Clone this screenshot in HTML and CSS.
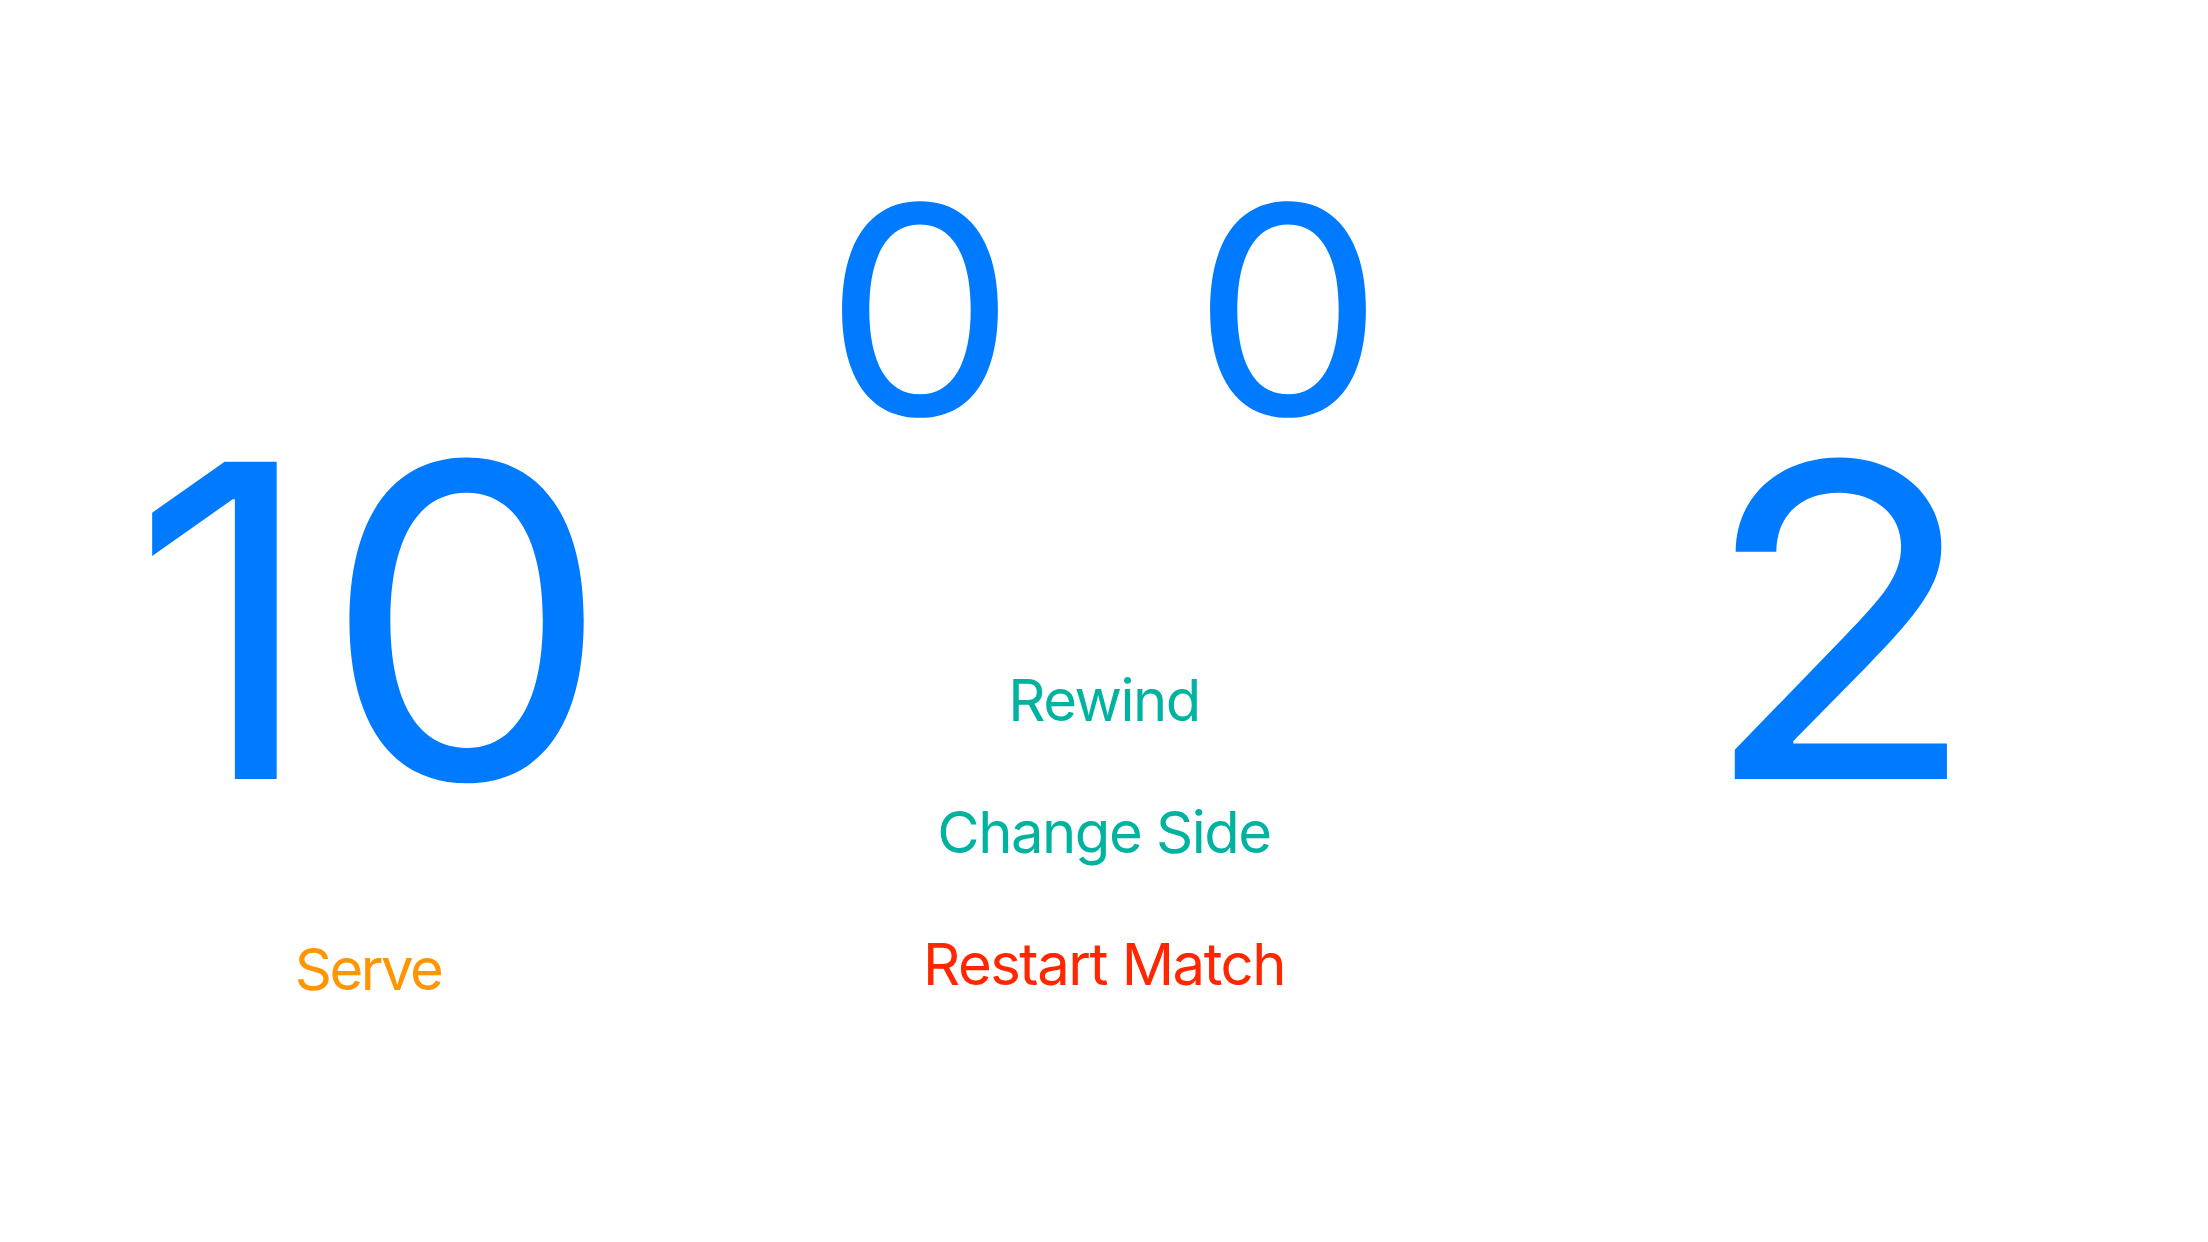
FILE: index.html
```html
<!DOCTYPE html>
<html>
<head>
<meta charset="utf-8">
<link rel="stylesheet" href="styles.css">
</head>
<body>
<main class="board">
  <section class="side">
    <div class="score score-left">10</div>
    <div class="btn serve">Serve</div>
  </section>
  <section class="middle">
    <div class="sets">
      <div class="set">0</div>
      <div class="set">0</div>
    </div>
    <div class="actions">
      <div class="btn teal">Rewind</div>
      <div class="btn teal">Change Side</div>
      <div class="btn red">Restart Match</div>
    </div>
  </section>
  <section class="side">
    <div class="score">2</div>
  </section>
</main>
</body>
</html>
```
FILE: styles.css
```css
html, body {
  margin: 0;
  padding: 0;
  background: #ffffff;
}
body {
  font-family: Inter, "Noto Sans", sans-serif;
  width: 2208px;
  height: 1242px;
  overflow: hidden;
}
.board {
  display: flex;
  width: 100%;
  height: 100%;
}
.side, .middle {
  flex: 1;
  display: flex;
  flex-direction: column;
  align-items: center;
}
.side {
  padding-top: 403px;
}
.middle {
  padding-top: 165px;
}
.score {
  font-size: 436px;
  line-height: 1;
  color: #007aff;
  transform: scaleX(1.05);
}
.score-left {
  letter-spacing: 5px;
  text-indent: 11px;
}
.sets {
  display: flex;
  gap: 168px;
}
.set {
  width: 200px;
  text-align: center;
  font-size: 290px;
  line-height: 1;
  color: #007aff;
  transform: scaleX(1.05);
}
.actions {
  margin-top: 216px;
  display: flex;
  flex-direction: column;
  align-items: center;
  gap: 74px;
}
.btn {
  font-size: 58px;
  line-height: 1;
  letter-spacing: -1.5px;
}
.serve {
  margin-top: 101px;
  color: #ff9500;
  letter-spacing: -2.5px;
}
.teal {
  color: #00b3a0;
}
.red {
  color: #ff2600;
}
```
